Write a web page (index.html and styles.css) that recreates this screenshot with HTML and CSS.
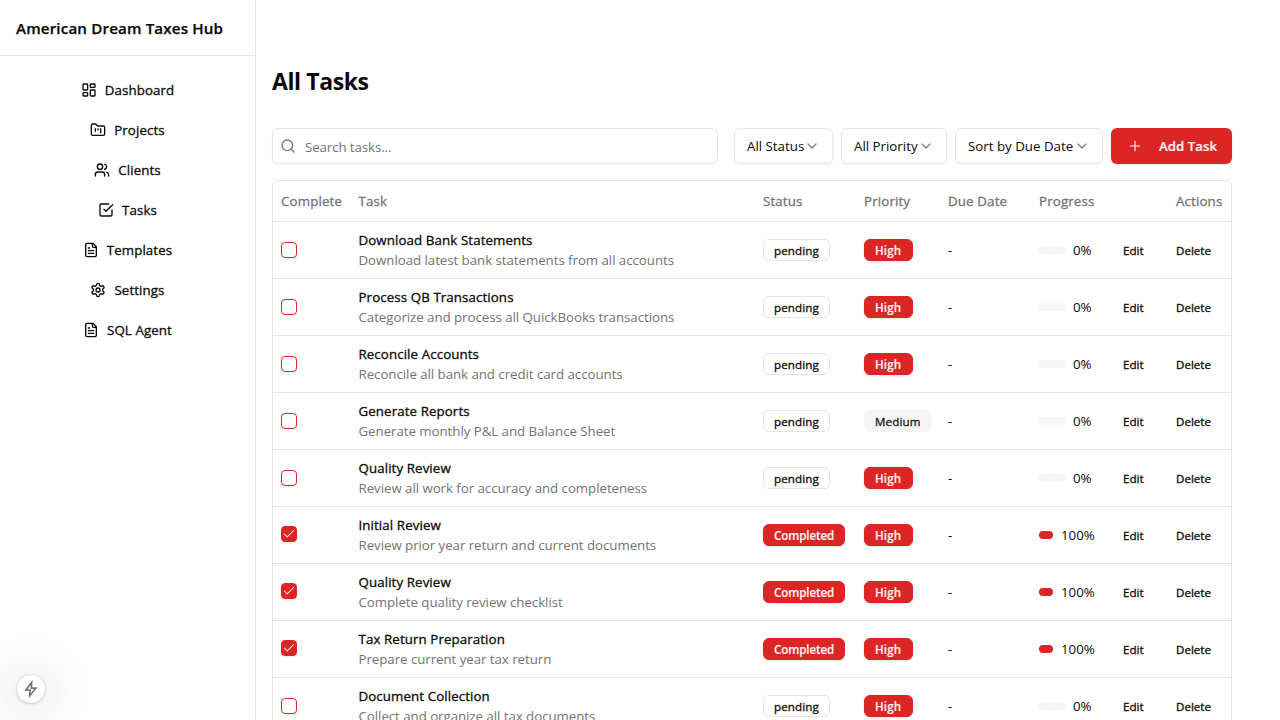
FILE: index.html
```html
<!DOCTYPE html>
<html lang="en">
<head>
<meta charset="utf-8">
<title>American Dream Taxes Hub</title>
<link rel="stylesheet" href="styles.css">
</head>
<body>
<svg class="sprite" aria-hidden="true">
  <symbol id="dashboard" viewBox="0 0 24 24"><rect width="7" height="9" x="3" y="3" rx="1"/><rect width="7" height="5" x="14" y="3" rx="1"/><rect width="7" height="9" x="14" y="12" rx="1"/><rect width="7" height="5" x="3" y="16" rx="1"/></symbol>
  <symbol id="folder" viewBox="0 0 24 24"><path d="M4 20h16a2 2 0 0 0 2-2V8a2 2 0 0 0-2-2h-7.93a2 2 0 0 1-1.66-.9l-.82-1.2A2 2 0 0 0 7.93 3H4a2 2 0 0 0-2 2v13c0 1.100.9 2 2 2Z"/><path d="M8 10v4M12 10v2M16 10v6"/></symbol>
  <symbol id="users" viewBox="0 0 24 24"><path d="M16 21v-2a4 4 0 0 0-4-4H6a4 4 0 0 0-4 4v2"/><circle cx="9" cy="7" r="4"/><path d="M22 21v-2a4 4 0 0 0-3-3.870M16 3.130a4 4 0 0 1 0 7.750"/></symbol>
  <symbol id="tasks" viewBox="0 0 24 24"><path d="m9 11 3 3L22 4"/><path d="M21 12v7a2 2 0 0 1-2 2H5a2 2 0 0 1-2-2V5a2 2 0 0 1 2-2h11"/></symbol>
  <symbol id="file" viewBox="0 0 24 24"><path d="M15 2H6a2 2 0 0 0-2 2v16a2 2 0 0 0 2 2h12a2 2 0 0 0 2-2V7Z"/><path d="M14 2v4a2 2 0 0 0 2 2h4M10 9H8M16 13H8M16 17H8"/></symbol>
  <symbol id="settings" viewBox="0 0 24 24"><path d="M12.220 2h-.44a2 2 0 0 0-2 2v.18a2 2 0 0 1-1 1.730l-.43.25a2 2 0 0 1-2 0l-.15-.08a2 2 0 0 0-2.730.73l-.22.38a2 2 0 0 0 .73 2.730l.15.1a2 2 0 0 1 1 1.720v.51a2 2 0 0 1-1 1.740l-.15.09a2 2 0 0 0-.73 2.730l.22.38a2 2 0 0 0 2.730.73l.15-.08a2 2 0 0 1 2 0l.43.25a2 2 0 0 1 1 1.730V20a2 2 0 0 0 2 2h.44a2 2 0 0 0 2-2v-.18a2 2 0 0 1 1-1.730l.43-.25a2 2 0 0 1 2 0l.15.08a2 2 0 0 0 2.730-.73l.22-.39a2 2 0 0 0-.73-2.730l-.15-.08a2 2 0 0 1-1-1.740v-.5a2 2 0 0 1 1-1.740l.15-.09a2 2 0 0 0 .73-2.730l-.22-.38a2 2 0 0 0-2.730-.73l-.15.08a2 2 0 0 1-2 0l-.43-.25a2 2 0 0 1-1-1.730V4a2 2 0 0 0-2-2z"/><circle cx="12" cy="12" r="3"/></symbol>
  <symbol id="search" viewBox="0 0 24 24"><circle cx="11" cy="11" r="8"/><path d="m21 21-4.300-4.300"/></symbol>
  <symbol id="chevron" viewBox="0 0 24 24"><path d="m6 9 6 6 6-6"/></symbol>
  <symbol id="plus" viewBox="0 0 24 24"><path d="M5 12h14M12 5v14"/></symbol>
  <symbol id="check" viewBox="0 0 24 24"><path d="M20 6 9 17l-5-5"/></symbol>
  <symbol id="bolt" viewBox="0 0 16 16"><path d="M8.600 2 3.500 8.900h3.700l-.4 5.100L12.500 7.200H8.300Z"/></symbol>
</svg>
<div class="app">
  <aside class="sidebar">
    <div class="brand">American Dream Taxes Hub</div>
    <nav class="nav">
      <a class="nav-item"><svg class="icon"><use href="#dashboard"/></svg><span>Dashboard</span></a>
      <a class="nav-item"><svg class="icon"><use href="#folder"/></svg><span>Projects</span></a>
      <a class="nav-item"><svg class="icon"><use href="#users"/></svg><span>Clients</span></a>
      <a class="nav-item"><svg class="icon"><use href="#tasks"/></svg><span>Tasks</span></a>
      <a class="nav-item"><svg class="icon"><use href="#file"/></svg><span>Templates</span></a>
      <a class="nav-item"><svg class="icon"><use href="#settings"/></svg><span>Settings</span></a>
      <a class="nav-item"><svg class="icon"><use href="#file"/></svg><span>SQL Agent</span></a>
    </nav>
  </aside>
  <main class="main">
    <h1 class="title">All Tasks</h1>
    <div class="toolbar">
      <div class="search"><svg class="icon"><use href="#search"/></svg><span>Search tasks...</span></div>
      <div class="filters">
        <div class="select status-filter"><span>All Status</span><svg class="icon"><use href="#chevron"/></svg></div>
        <div class="select priority-filter"><span>All Priority</span><svg class="icon"><use href="#chevron"/></svg></div>
        <div class="select sort"><span>Sort by Due Date</span><svg class="icon"><use href="#chevron"/></svg></div>
        <div class="add"><svg class="icon"><use href="#plus"/></svg><span>Add Task</span></div>
      </div>
    </div>
    <div class="table" id="table">
      <div class="row head"><div>Complete</div><div>Task</div><div>Status</div><div>Priority</div><div>Due Date</div><div>Progress</div><div></div><div>Actions</div></div>
    </div>
  </main>
</div>
<div class="dev-badge"><svg class="icon"><use href="#bolt"/></svg></div>
<script src="tasks.js"></script>
</body>
</html>
```
FILE: styles.css
```css
* { box-sizing: border-box; }
body {
  margin: 0;
  height: 720px;
  overflow: hidden;
  background: #fff;
  color: #0a0a0a;
  font-family: "Open Sans", "Noto Sans", sans-serif;
  font-size: 13.3px;
  line-height: 20px;
}
.sprite { display: none; }
.icon {
  width: 16px;
  height: 16px;
  flex: none;
  fill: none;
  stroke: currentColor;
  stroke-width: 2;
  stroke-linecap: round;
  stroke-linejoin: round;
}
.app { display: flex; height: 720px; }
.sidebar { width: 256px; flex: none; border-right: 1px solid #e5e5e5; }
.brand {
  height: 56px;
  padding: 14px 16px;
  border-bottom: 1px solid #e5e5e5;
  font-size: 15.2px;
  font-weight: 600;
  letter-spacing: 0.13px;
  -webkit-text-stroke: 0.25px currentColor;
  line-height: 28px;
  white-space: nowrap;
}
.nav { display: flex; flex-direction: column; gap: 4px; padding: 16px 8px; }
.nav-item {
  display: flex;
  align-items: center;
  justify-content: center;
  gap: 8px;
  height: 36px;
}
.nav-item span, .head, .name, .action {
  letter-spacing: 0.1px;
  -webkit-text-stroke: 0.3px currentColor;
}
.main { flex: 1; min-width: 0; padding: 64px 48px 0 16px; }
.title { margin: 0 0 30px; font-size: 23px; line-height: 34px; font-weight: 700; letter-spacing: -0.4px; }
.toolbar { display: flex; gap: 16px; margin-bottom: 16px; }
.search {
  flex: 1;
  display: flex;
  align-items: center;
  gap: 9px;
  height: 36px;
  padding: 0 7px;
  border: 1px solid #e5e5e5;
  border-radius: 6px;
  box-shadow: 0 1px 2px rgba(0, 0, 0, 0.05);
  color: #737373;
}
.search span { padding-top: 2px; letter-spacing: -0.1px; }
.filters { display: flex; gap: 8px; }
.select {
  display: flex;
  align-items: center;
  justify-content: space-between;
  height: 36px;
  padding: 0 12px;
  border: 1px solid #e5e5e5;
  border-radius: 6px;
  box-shadow: 0 1px 2px rgba(0, 0, 0, 0.05);
  white-space: nowrap;
}
.select .icon { opacity: 0.5; }
.status-filter { width: 99px; }
.priority-filter { width: 106px; }
.sort { width: 148px; }
.add {
  display: flex;
  align-items: center;
  gap: 16px;
  width: 121px;
  height: 36px;
  padding: 0 16px;
  border-radius: 6px;
  background: #dc2626;
  box-shadow: 0 1px 2px rgba(0, 0, 0, 0.1);
  color: #fef2f2;
  font-weight: 600;
  white-space: nowrap;
}
.add .icon { stroke-width: 1.8; }
.add span { -webkit-text-stroke: 0.2px currentColor; }
.table { border: 1px solid #e5e5e5; border-radius: 6px 6px 0 0; }
.row {
  display: grid;
  grid-template-columns: 77.5px 404.5px 101px 84px 91px 84px 53px 63px;
  align-items: center;
  height: 57px;
  border-bottom: 1px solid #e5e5e5;
  white-space: nowrap;
}
.row > div { padding-left: 8px; }
.head { height: 41px; color: #737373; }
.head > div { letter-spacing: 0.15px; }
.description { color: #737373; letter-spacing: -0.05px; }
.checkbox {
  display: flex;
  width: 16px;
  height: 16px;
  border: 1px solid #dc2626;
  border-radius: 4px;
  box-shadow: 0 1px 2px rgba(0, 0, 0, 0.08);
}
.checkbox.checked { background: #dc2626; color: #fef2f2; margin-top: -2px; }
.checkbox .icon { width: 14px; height: 14px; stroke-width: 1.8; }
.badge {
  display: block;
  width: max-content;
  height: 22px;
  padding: 1px 10px 0;
  border: 1px solid #e5e5e5;
  border-radius: 6px;
  font-size: 11.6px;
  letter-spacing: 0.12px;
  -webkit-text-stroke: 0.3px currentColor;
  line-height: 20px;
}
.badge.red {
  border-color: #dc2626;
  background: #dc2626;
  box-shadow: 0 1px 2px rgba(0, 0, 0, 0.12);
  color: #fef2f2;
  font-weight: 600;
  letter-spacing: 0;
  -webkit-text-stroke: 0.15px currentColor;
}
.badge.completed { width: 82px; padding-right: 0; letter-spacing: -0.1px; }
.badge.high { width: 49px; padding-right: 0; letter-spacing: 0.15px; }
.badge.gray { border-color: #f5f5f5; background: #f5f5f5; color: #171717; }
.row > .progress { display: flex; align-items: center; gap: 8px; }
.bar { width: 26px; height: 8px; border-radius: 4px; background: #f5f5f5; }
.bar.full { width: 14px; background: #dc2626; }
.row > .action { padding-top: 1px; font-size: 11.6px; letter-spacing: 0; }
.dev-badge {
  position: absolute;
  left: 17px;
  bottom: 17px;
  display: flex;
  align-items: center;
  justify-content: center;
  width: 28px;
  height: 28px;
  border-radius: 50%;
  background: #fff;
  box-shadow: 0 0 0 1px rgba(0, 0, 0, 0.08), 0 1px 3px rgba(0, 0, 0, 0.12), 0 2px 44px 12px rgba(0, 0, 0, 0.09);
  color: #737373;
}
.dev-badge .icon { width: 18px; height: 18px; stroke-width: 1.4; stroke-linejoin: miter; }
```
FILE: tasks.js
```js
const tasks = [
  ["Download Bank Statements", "Download latest bank statements from all accounts", false, "High"],
  ["Process QB Transactions", "Categorize and process all QuickBooks transactions", false, "High"],
  ["Reconcile Accounts", "Reconcile all bank and credit card accounts", false, "High"],
  ["Generate Reports", "Generate monthly P&amp;L and Balance Sheet", false, "Medium"],
  ["Quality Review", "Review all work for accuracy and completeness", false, "High"],
  ["Initial Review", "Review prior year return and current documents", true, "High"],
  ["Quality Review", "Complete quality review checklist", true, "High"],
  ["Tax Return Preparation", "Prepare current year tax return", true, "High"],
  ["Document Collection", "Collect and organize all tax documents", false, "High"],
];

const rows = tasks.map(([name, description, done, priority]) => `
  <div class="row">
    <div><span class="checkbox ${done ? "checked" : ""}">${done ? '<svg class="icon"><use href="#check"/></svg>' : ""}</span></div>
    <div><div class="name">${name}</div><div class="description">${description}</div></div>
    <div><span class="badge ${done ? "red completed" : ""}">${done ? "Completed" : "pending"}</span></div>
    <div><span class="badge ${priority === "High" ? "red high" : "gray"}">${priority}</span></div>
    <div>-</div>
    <div class="progress"><span class="bar ${done ? "full" : ""}"></span><span>${done ? "100%" : "0%"}</span></div>
    <div class="action">Edit</div>
    <div class="action">Delete</div>
  </div>`);

document.getElementById("table").insertAdjacentHTML("beforeend", rows.join(""));
```
